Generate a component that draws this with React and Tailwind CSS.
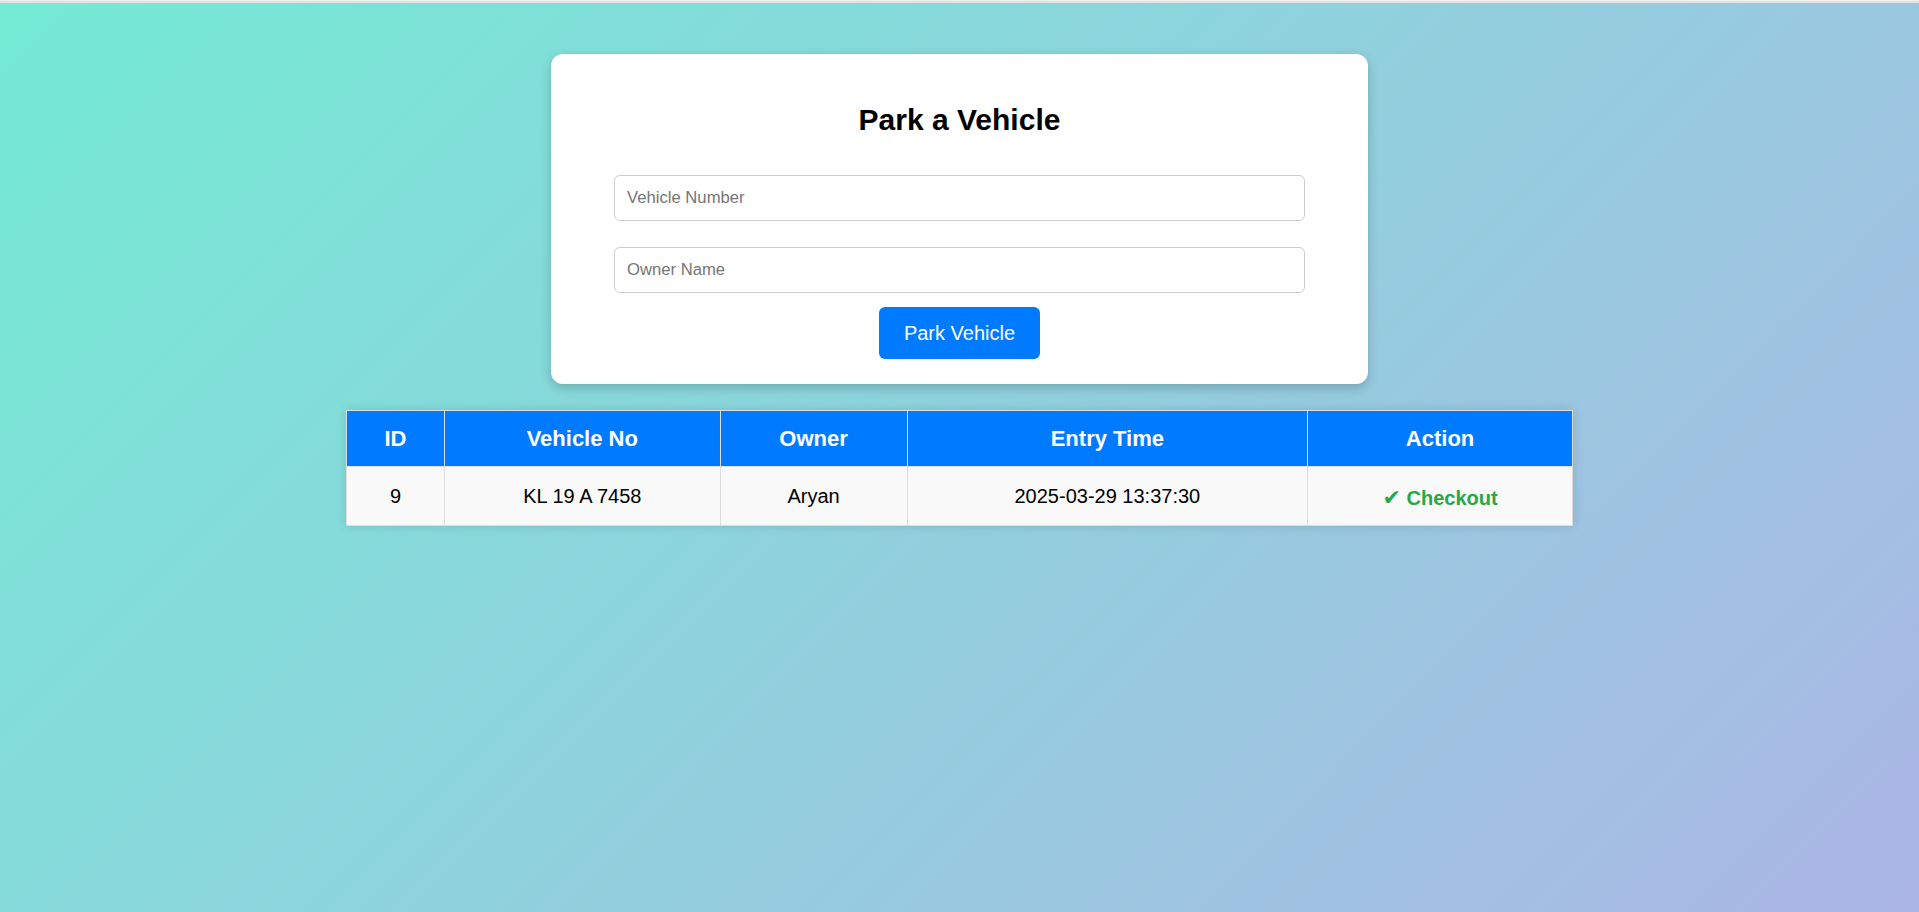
export default function App() {
  const rows = [
    { id: 9, number: 'KL 19 A 7458', owner: 'Aryan', entry: '2025-03-29 13:37:30' },
  ]

  return (
    <div className="min-h-screen font-['Liberation_Sans',Arial,sans-serif]">
      {/* thin browser line at the very top */}
      <div className="h-[3px] bg-[#e2e2e2] border-t border-[#f0f0f0]" />

      <div className="min-h-[909px] bg-[linear-gradient(135deg,#74ebd5_0%,#acb6e5_100%)] pt-[51px] flex flex-col items-center">
        {/* Park form */}
        <div className="w-[817px] bg-white rounded-[12px] shadow-[0_4px_12px_rgba(0,0,0,0.2)] px-[63px] pt-[49px] pb-[25px] flex flex-col items-center">
          <h2 className="text-[30px] leading-[34px] font-bold text-black">Park a Vehicle</h2>

          <input
            type="text"
            placeholder="Vehicle Number"
            className="mt-[38px] w-full h-[46px] px-[12px] border border-[#cccccc] rounded-[6px] text-[16.67px] text-black placeholder:text-[#757575] outline-none"
          />
          <input
            type="text"
            placeholder="Owner Name"
            className="mt-[26px] w-full h-[46px] px-[12px] border border-[#cccccc] rounded-[6px] text-[16.67px] text-black placeholder:text-[#757575] outline-none"
          />

          <button className="mt-[14px] w-[161px] h-[52px] bg-[#007bff] text-white text-[20px] rounded-[6px]">
            Park Vehicle
          </button>
        </div>

        {/* Parked vehicles */}
        <table className="mt-[26px] w-[1227px] border-collapse bg-white shadow-[0_0_10px_rgba(0,0,0,0.12)] text-center">
          <thead>
            <tr className="bg-[#007bff] text-white text-[22px] font-bold">
              <th className="w-[98px] h-[56px] border border-[#dddddd]">ID</th>
              <th className="w-[276px] border border-[#dddddd]">Vehicle No</th>
              <th className="w-[187px] border border-[#dddddd]">Owner</th>
              <th className="w-[401px] border border-[#dddddd]">Entry Time</th>
              <th className="w-[265px] border border-[#dddddd]">Action</th>
            </tr>
          </thead>
          <tbody>
            {rows.map(r => (
              <tr key={r.id} className="bg-[#f9f9f9] text-[20px] text-black">
                <td className="h-[59px] border border-[#dddddd]">{r.id}</td>
                <td className="border border-[#dddddd]">{r.number}</td>
                <td className="border border-[#dddddd]">{r.owner}</td>
                <td className="border border-[#dddddd]">{r.entry}</td>
                <td className="border border-[#dddddd]">
                  <button className="pt-[6px] text-[#28a745] font-bold text-[20px] leading-[24px]">
                    <span className="font-['DejaVu_Sans',sans-serif] text-[22px] font-normal">✔</span> Checkout
                  </button>
                </td>
              </tr>
            ))}
          </tbody>
        </table>
      </div>
    </div>
  )
}
